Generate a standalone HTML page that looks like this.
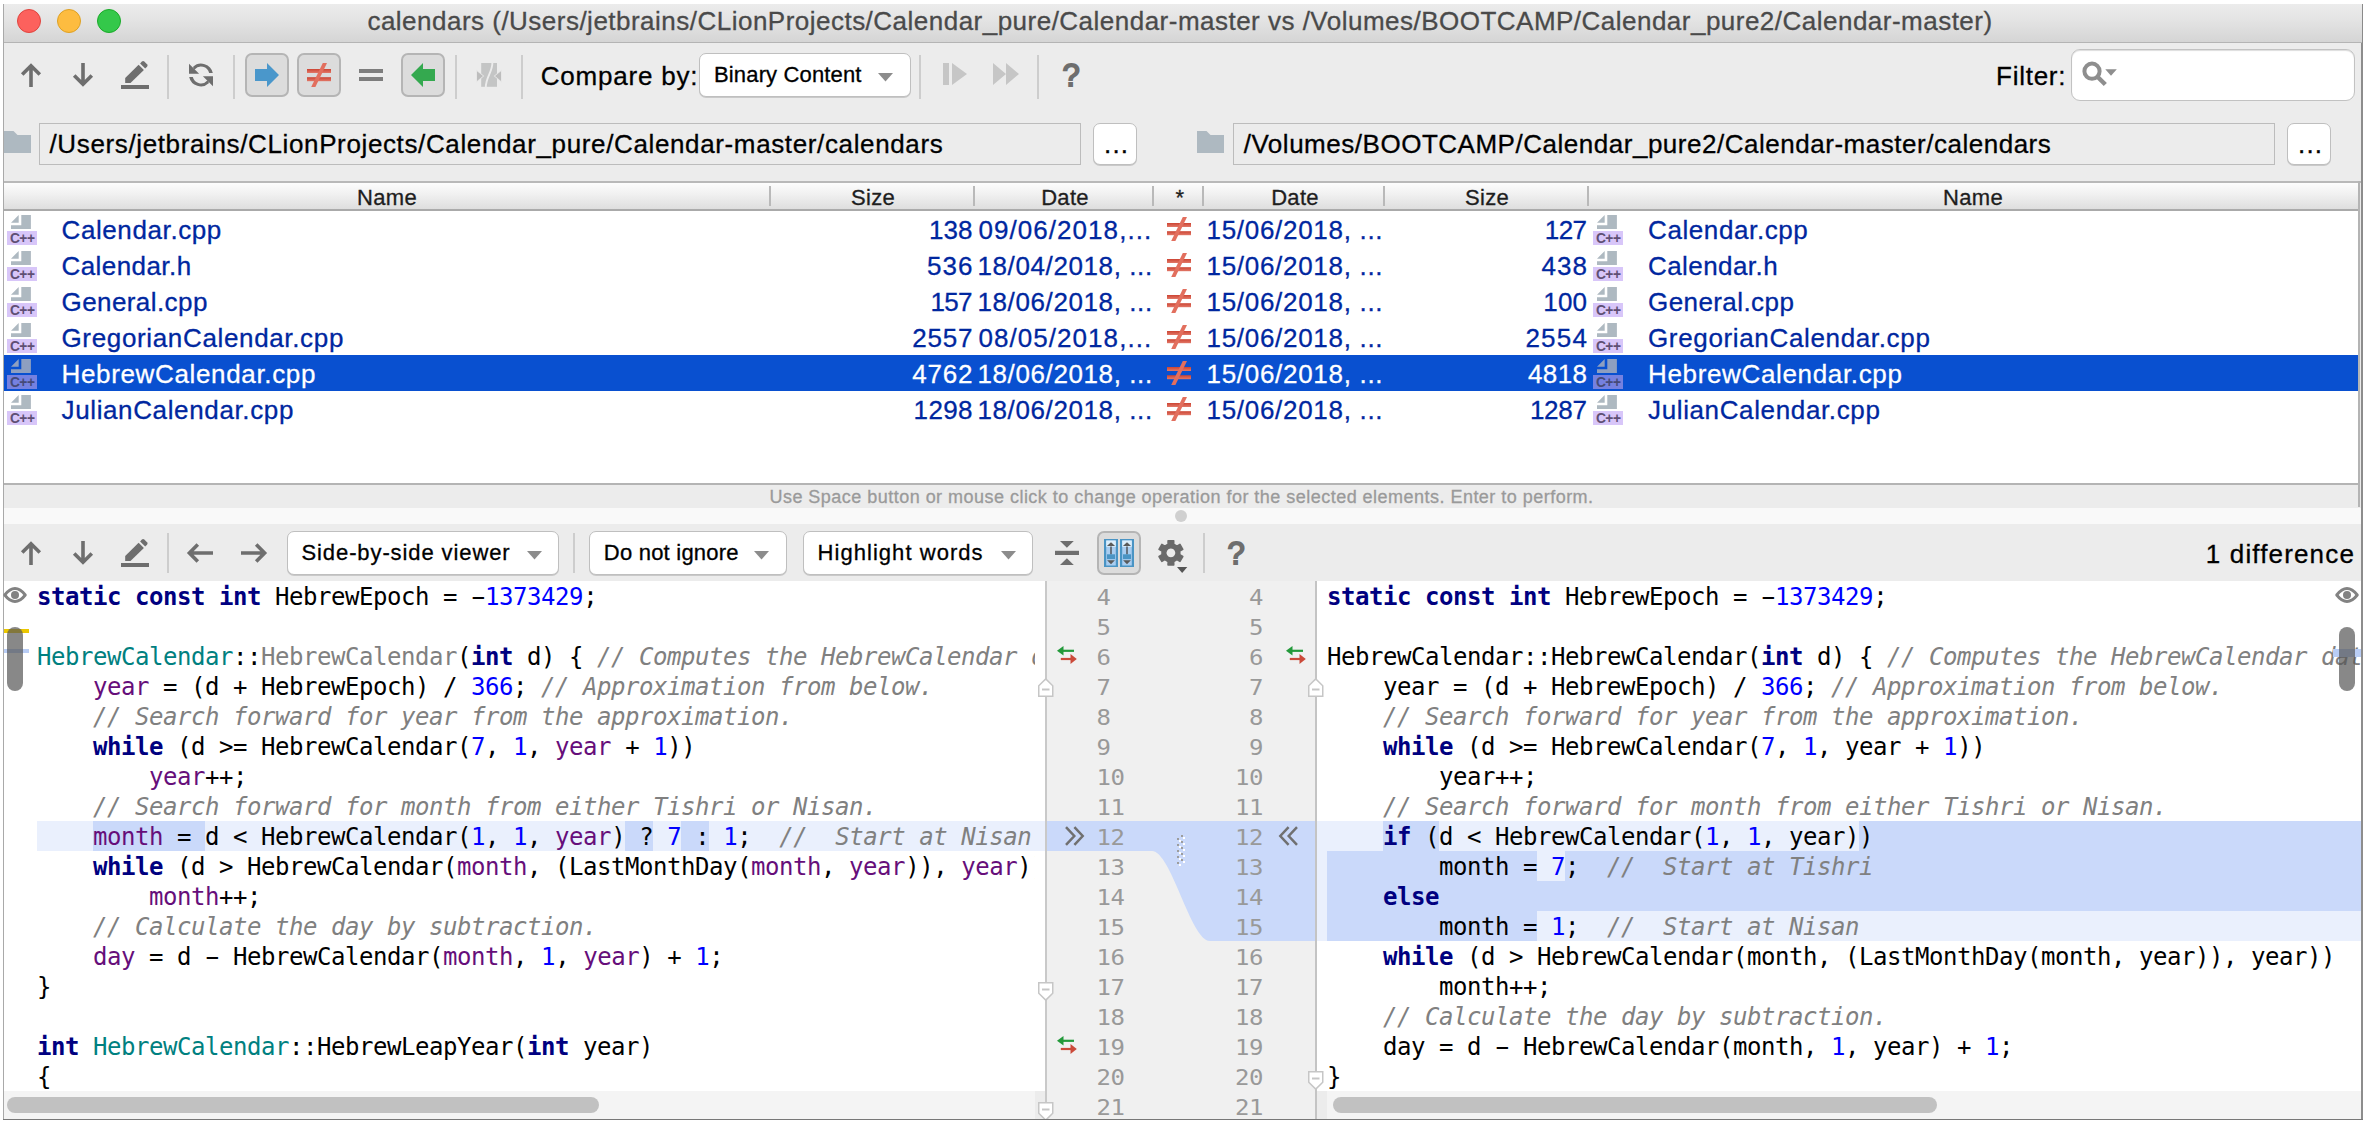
<!DOCTYPE html>
<html lang="en"><head><meta charset="utf-8"><title>calendars</title>
<style>
*{box-sizing:border-box;margin:0;padding:0}
html,body{width:2367px;height:1126px;overflow:hidden;background:#fff}
body{position:relative;font-family:"Liberation Sans", sans-serif;color:#000}
.abs{position:absolute}
.t{position:absolute;white-space:pre;font-family:"Liberation Sans", sans-serif;-webkit-text-stroke:0.3px currentColor}
svg{position:absolute;overflow:visible}
#win{position:absolute;left:3px;top:4px;width:2360px;height:1116px;background:#ececec;border-left:1px solid #a9a9a9;border-right:2px solid #8a8a8a;overflow:hidden}
#title{position:absolute;left:0;top:4px;width:2367px;height:39px}
.code{position:absolute;top:581px;height:538px;overflow:hidden;font-family:"DejaVu Sans Mono", "Liberation Mono", monospace;font-size:24px;letter-spacing:-0.449px;white-space:pre;color:#000}
.ln{position:absolute;left:0;height:30px;line-height:30px;margin-top:1px}
.k{color:#000080;font-weight:bold}
.n{color:#0000ff}
.c{color:#808080;font-style:italic}
.t_{color:#008080}
.g{color:#808080}
.p{color:#660e7a}
.m{display:inline-block;transform:scaleX(1.85)}
.num{position:absolute;font-family:"DejaVu Sans Mono", "Liberation Mono", monospace;font-size:24px;letter-spacing:-0.449px;color:#999;height:30px;line-height:30px;width:60px;margin-top:1px;transform:scaleY(0.92);transform-origin:0 23.3px}
.btn{position:absolute;background:#dcdcdc;border:2px solid #b5b5b5;border-radius:7px}
.combo{position:absolute;background:#fff;border:1px solid #bfbfbf;border-radius:7px;box-shadow:0 1px 0 #c9c9c9}
.sep{position:absolute;width:2px;background:#cdcdcd}
.hsep{position:absolute;width:2px;background:#b9b9b9;top:186px;height:20px}
</style></head>
<body>
<div id="win"></div>
<div class="abs" style="left:4px;top:4px;width:2358px;height:38px;background:linear-gradient(#ececec,#e4e4e4 40%,#d5d5d5)"></div>
<div class="abs" style="left:4px;top:42px;width:2358px;height:1px;background:#b4b4b4"></div>
<div class="abs" style="left:17px;top:9px;width:24px;height:24px;border-radius:12px;background:#fc615d;border:1px solid #e0443e"></div>
<div class="abs" style="left:57px;top:9px;width:24px;height:24px;border-radius:12px;background:#fdbc40;border:1px solid #dea123"></div>
<div class="abs" style="left:97px;top:9px;width:24px;height:24px;border-radius:12px;background:#34c84a;border:1px solid #1aab29"></div>
<div class="t" style="top:7.99px;left:1180px;transform:translateX(-50%);font-size:26px;line-height:26px;height:26px;color:#4a4a4a;letter-spacing:0.485px;">calendars (/Users/jetbrains/CLionProjects/Calendar_pure/Calendar-master vs /Volumes/BOOTCAMP/Calendar_pure2/Calendar-master)</div>
<svg style="left:19px;top:63px" width="24" height="24" viewBox="0 0 24 24"><path d="M12 2V24M3.2 11.6L12 2.8L20.8 11.6" fill="none" stroke="#6e6e6e" stroke-width="3.6" stroke-linejoin="miter"/></svg>
<svg style="left:71px;top:63px" width="24" height="24" viewBox="0 0 24 24"><path d="M12 0V22M3.2 12.4L12 21.2L20.8 12.4" fill="none" stroke="#6e6e6e" stroke-width="3.6" stroke-linejoin="miter"/></svg>
<svg style="left:121px;top:61px" width="28" height="28" viewBox="0 0 28 28"><rect x="0" y="24" width="28" height="4" fill="#6e6e6e"/><path d="M4.2 22V17L17.6 3.7L22.9 9L9.5 22Z" fill="#6e6e6e"/><path d="M19.1 2.4L20.9 .6a1.7 1.7 0 0 1 2.4 0L26 3.3a1.7 1.7 0 0 1 0 2.4L24.2 7.5Z" fill="#6e6e6e"/></svg>
<div class="sep" style="left:167px;top:55px;height:44px"></div>
<svg style="left:189px;top:63px" width="24" height="24" viewBox="0 0 24 24"><path d="M3.9 3.9A12 12 0 0 1 23.83 10H20.16A8.4 8.4 0 0 0 5.66 6.49ZM0 0.7V10.8H10.1Z" fill="#6e6e6e"/><g transform="rotate(180 12 12)"><path d="M3.9 3.9A12 12 0 0 1 23.83 10H20.16A8.4 8.4 0 0 0 5.66 6.49ZM0 0.7V10.8H10.1Z" fill="#6e6e6e"/></g></svg>
<div class="sep" style="left:233px;top:55px;height:44px"></div>
<div class="btn" style="left:245px;top:53px;width:44px;height:44px"></div>
<div class="btn" style="left:297px;top:53px;width:44px;height:44px"></div>
<div class="btn" style="left:401px;top:53px;width:44px;height:44px"></div>
<svg style="left:255px;top:63px" width="24" height="24" viewBox="0 0 24 24"><path d="M0 6H12V0L24 12L12 24V18H0Z" fill="#4a97cb"/></svg>
<svg style="left:307px;top:63px" width="24" height="24" viewBox="0 0 24 24"><defs><linearGradient id="ng" x1="0" y1="0" x2="0" y2="1"><stop offset="0" stop-color="#cc4433"/><stop offset="1" stop-color="#e27868"/></linearGradient></defs><rect x="0" y="6" width="24" height="4" fill="url(#ng)"/><rect x="0" y="14.2" width="24" height="4" fill="url(#ng)"/><path d="M15.8 0H20L8.4 24H4.2Z" fill="#e26f5e"/></svg>
<div class="abs" style="left:359px;top:69px;width:24px;height:4px;background:#7d7d7d;"></div>
<div class="abs" style="left:359px;top:77.3px;width:24px;height:4px;background:#7d7d7d;"></div>
<svg style="left:411px;top:63px" width="24" height="24" viewBox="0 0 24 24"><path d="M24 6H12V0L0 12L12 24V18H24Z" fill="#34a94f"/></svg>
<div class="sep" style="left:455px;top:55px;height:44px"></div>
<svg style="left:477px;top:63px" width="24" height="24" viewBox="0 0 24 24"><rect x="4.2" y="0" width="15.8" height="23.8" fill="#c4c5c5"/><path d="M15.4 -0.5C15.4 9.5 8.8 14 8.8 24.5" fill="none" stroke="#ececec" stroke-width="1.9"/><path d="M0 8.2V18L6 13.1Z M24 8.2V18L18 13.1Z" fill="#bdbdbd" stroke="#e6e6e6" stroke-width="1.6" paint-order="stroke"/></svg>
<div class="sep" style="left:521px;top:55px;height:44px"></div>
<div class="t" style="top:62.99px;font-size:26px;line-height:26px;height:26px;color:#000;left:540.7px;letter-spacing:0.79px;">Compare by:</div>
<div class="combo" style="left:699px;top:53px;width:212px;height:44px"></div>
<div class="t" style="top:64.08px;font-size:22px;line-height:22px;height:22px;color:#000;left:714px;letter-spacing:0.15px;">Binary Content</div>
<svg style="left:878px;top:73px" width="15" height="8.5" viewBox="0 0 15 8.5"><path d="M0 0H15 L7.5 8.5Z" fill="#8c8c8c"/></svg>
<div class="sep" style="left:919px;top:55px;height:44px"></div>
<svg style="left:943px;top:63px" width="24" height="22" viewBox="0 0 24 22"><rect x="0" y="0" width="6" height="22" fill="#c6c6c6"/><path d="M9 0L24 11L9 22Z" fill="#c6c6c6"/></svg>
<svg style="left:993px;top:63px" width="26" height="22" viewBox="0 0 26 22"><path d="M0 0L13 11L0 22Z M13 0L26 11L13 22Z" fill="#c6c6c6"/></svg>
<div class="sep" style="left:1037px;top:55px;height:44px"></div>
<div class="t" style="top:60.26px;left:1071px;transform:translateX(-50%);font-size:31px;line-height:31px;height:31px;color:#6e6e6e;-webkit-text-stroke:1.8px #6e6e6e;">?</div>
<div class="t" style="top:62.99px;font-size:26px;line-height:26px;height:26px;color:#000;left:1996px;letter-spacing:0.75px;">Filter:</div>
<div class="abs" style="left:2071px;top:49px;width:284px;height:52px;background:#fff;border:1px solid #c2c2c2;border-radius:9px;box-shadow:inset 0 1px 1px #ddd"></div>
<svg style="left:2082px;top:62px" width="36" height="26" viewBox="0 0 36 26"><circle cx="10" cy="9.2" r="7.6" fill="none" stroke="#8e8e8e" stroke-width="4"/><path d="M15 14.2L23.3 22.5" stroke="#8e8e8e" stroke-width="4.4" fill="none"/><path d="M23.3 7.2H34.8L29 13.8Z" fill="#8e8e8e"/></svg>
<svg style="left:4px;top:131px" width="27" height="22" viewBox="0 0 27 22"><path d="M0 0H9.5L13.5 4H27V22H0Z" fill="#aeb9c1"/></svg>
<div class="abs" style="left:39px;top:123px;width:1042px;height:42px;border:1px solid #bcbcbc;background:#ececec"></div>
<div class="t" style="top:130.99px;font-size:26px;line-height:26px;height:26px;color:#000;left:49.5px;letter-spacing:0.63px;">/Users/jetbrains/CLionProjects/Calendar_pure/Calendar-master/calendars</div>
<div class="combo" style="left:1093px;top:123px;width:44px;height:42px"></div>
<div class="t" style="top:130.99px;font-size:26px;line-height:26px;height:26px;color:#000;left:1104px;letter-spacing:1.2px;">...</div>
<svg style="left:1197px;top:131px" width="27" height="22" viewBox="0 0 27 22"><path d="M0 0H9.5L13.5 4H27V22H0Z" fill="#aeb9c1"/></svg>
<div class="abs" style="left:1233px;top:123px;width:1042px;height:42px;border:1px solid #bcbcbc;background:#ececec"></div>
<div class="t" style="top:130.99px;font-size:26px;line-height:26px;height:26px;color:#000;left:1243.7px;letter-spacing:0.52px;">/Volumes/BOOTCAMP/Calendar_pure2/Calendar-master/calendars</div>
<div class="combo" style="left:2287px;top:123px;width:44px;height:42px"></div>
<div class="t" style="top:130.99px;font-size:26px;line-height:26px;height:26px;color:#000;left:2298px;letter-spacing:1.2px;">...</div>
<div class="abs" style="left:4px;top:181px;width:2358px;height:2px;background:#b9b9b9;"></div>
<div class="abs" style="left:4px;top:183px;width:2354px;height:26px;background:linear-gradient(#fdfdfd,#f0f0f0 45%,#dedede)"></div>
<div class="abs" style="left:4px;top:209px;width:2354px;height:2px;background:#aaaaaa;"></div>
<div class="abs" style="left:4px;top:211px;width:2354px;height:272px;background:#fff;"></div>
<div class="abs" style="left:2358px;top:181px;width:2px;height:326px;background:#b4b4b4;"></div>
<div class="hsep" style="left:769px"></div>
<div class="hsep" style="left:973px"></div>
<div class="hsep" style="left:1152px"></div>
<div class="hsep" style="left:1202px"></div>
<div class="hsep" style="left:1383px"></div>
<div class="hsep" style="left:1587px"></div>
<div class="t" style="top:187.08px;left:387px;transform:translateX(-50%);font-size:22px;line-height:22px;height:22px;color:#1e1e1e;letter-spacing:0.3px;">Name</div>
<div class="t" style="top:187.08px;left:873px;transform:translateX(-50%);font-size:22px;line-height:22px;height:22px;color:#1e1e1e;letter-spacing:0.3px;">Size</div>
<div class="t" style="top:187.08px;left:1065px;transform:translateX(-50%);font-size:22px;line-height:22px;height:22px;color:#1e1e1e;letter-spacing:0.3px;">Date</div>
<div class="t" style="top:187.08px;left:1180px;transform:translateX(-50%);font-size:22px;line-height:22px;height:22px;color:#1e1e1e;letter-spacing:0.3px;">*</div>
<div class="t" style="top:187.08px;left:1295px;transform:translateX(-50%);font-size:22px;line-height:22px;height:22px;color:#1e1e1e;letter-spacing:0.3px;">Date</div>
<div class="t" style="top:187.08px;left:1487px;transform:translateX(-50%);font-size:22px;line-height:22px;height:22px;color:#1e1e1e;letter-spacing:0.3px;">Size</div>
<div class="t" style="top:187.08px;left:1973px;transform:translateX(-50%);font-size:22px;line-height:22px;height:22px;color:#1e1e1e;letter-spacing:0.3px;">Name</div>
<svg style="left:7px;top:215px" width="30" height="30" viewBox="0 0 30 30"><path d="M14.3 0H23.9V13.9H4V10.2H14.3Z M11.7 -0.1V7.7H4Z" fill="#aeb9c1"/><rect x="0" y="16" width="30" height="14" fill="#d8c6f9"/><text x="15.2" y="27.9" text-anchor="middle" font-family='"Liberation Sans", sans-serif' font-size="13.8" font-weight="bold" fill="#5f4f74" letter-spacing="-0.5">C++</text></svg>
<div class="t" style="top:217.49px;font-size:26px;line-height:26px;height:26px;color:#00279f;left:61.5px;letter-spacing:0.6px;">Calendar.cpp</div>
<div class="t" style="top:217.49px;font-size:26px;line-height:26px;height:26px;color:#00279f;right:1394.5px;">138</div>
<div class="t" style="top:217.49px;font-size:26px;line-height:26px;height:26px;color:#00279f;left:978.5px;letter-spacing:1.05px;">09/06/2018,...</div>
<svg style="left:1167px;top:217px" width="24" height="24" viewBox="0 0 24 24"><defs><linearGradient id="ng" x1="0" y1="0" x2="0" y2="1"><stop offset="0" stop-color="#cc4433"/><stop offset="1" stop-color="#e27868"/></linearGradient></defs><rect x="0" y="6" width="24" height="4" fill="url(#ng)"/><rect x="0" y="14.2" width="24" height="4" fill="url(#ng)"/><path d="M15.8 0H20L8.4 24H4.2Z" fill="#e26f5e"/></svg>
<div class="t" style="top:217.49px;font-size:26px;line-height:26px;height:26px;color:#00279f;left:1206.5px;letter-spacing:0.7px;">15/06/2018, ...</div>
<div class="t" style="top:217.49px;font-size:26px;line-height:26px;height:26px;color:#00279f;right:780.6px;letter-spacing:-0.6px;">127</div>
<svg style="left:1593px;top:215px" width="30" height="30" viewBox="0 0 30 30"><path d="M14.3 0H23.9V13.9H4V10.2H14.3Z M11.7 -0.1V7.7H4Z" fill="#aeb9c1"/><rect x="0" y="16" width="30" height="14" fill="#d8c6f9"/><text x="15.2" y="27.9" text-anchor="middle" font-family='"Liberation Sans", sans-serif' font-size="13.8" font-weight="bold" fill="#5f4f74" letter-spacing="-0.5">C++</text></svg>
<div class="t" style="top:217.49px;font-size:26px;line-height:26px;height:26px;color:#00279f;left:1648px;letter-spacing:0.6px;">Calendar.cpp</div>
<svg style="left:7px;top:251px" width="30" height="30" viewBox="0 0 30 30"><path d="M14.3 0H23.9V13.9H4V10.2H14.3Z M11.7 -0.1V7.7H4Z" fill="#aeb9c1"/><rect x="0" y="16" width="30" height="14" fill="#d8c6f9"/><text x="15.2" y="27.9" text-anchor="middle" font-family='"Liberation Sans", sans-serif' font-size="13.8" font-weight="bold" fill="#5f4f74" letter-spacing="-0.5">C++</text></svg>
<div class="t" style="top:253.49px;font-size:26px;line-height:26px;height:26px;color:#00279f;left:61.5px;letter-spacing:0.43px;">Calendar.h</div>
<div class="t" style="top:253.49px;font-size:26px;line-height:26px;height:26px;color:#00279f;right:1393.4px;letter-spacing:1.1px;">536</div>
<div class="t" style="top:253.49px;font-size:26px;line-height:26px;height:26px;color:#00279f;left:977.5px;letter-spacing:0.6px;">18/04/2018, ...</div>
<svg style="left:1167px;top:253px" width="24" height="24" viewBox="0 0 24 24"><defs><linearGradient id="ng" x1="0" y1="0" x2="0" y2="1"><stop offset="0" stop-color="#cc4433"/><stop offset="1" stop-color="#e27868"/></linearGradient></defs><rect x="0" y="6" width="24" height="4" fill="url(#ng)"/><rect x="0" y="14.2" width="24" height="4" fill="url(#ng)"/><path d="M15.8 0H20L8.4 24H4.2Z" fill="#e26f5e"/></svg>
<div class="t" style="top:253.49px;font-size:26px;line-height:26px;height:26px;color:#00279f;left:1206.5px;letter-spacing:0.7px;">15/06/2018, ...</div>
<div class="t" style="top:253.49px;font-size:26px;line-height:26px;height:26px;color:#00279f;right:778.9px;letter-spacing:1.1px;">438</div>
<svg style="left:1593px;top:251px" width="30" height="30" viewBox="0 0 30 30"><path d="M14.3 0H23.9V13.9H4V10.2H14.3Z M11.7 -0.1V7.7H4Z" fill="#aeb9c1"/><rect x="0" y="16" width="30" height="14" fill="#d8c6f9"/><text x="15.2" y="27.9" text-anchor="middle" font-family='"Liberation Sans", sans-serif' font-size="13.8" font-weight="bold" fill="#5f4f74" letter-spacing="-0.5">C++</text></svg>
<div class="t" style="top:253.49px;font-size:26px;line-height:26px;height:26px;color:#00279f;left:1648px;letter-spacing:0.43px;">Calendar.h</div>
<svg style="left:7px;top:287px" width="30" height="30" viewBox="0 0 30 30"><path d="M14.3 0H23.9V13.9H4V10.2H14.3Z M11.7 -0.1V7.7H4Z" fill="#aeb9c1"/><rect x="0" y="16" width="30" height="14" fill="#d8c6f9"/><text x="15.2" y="27.9" text-anchor="middle" font-family='"Liberation Sans", sans-serif' font-size="13.8" font-weight="bold" fill="#5f4f74" letter-spacing="-0.5">C++</text></svg>
<div class="t" style="top:289.49px;font-size:26px;line-height:26px;height:26px;color:#00279f;left:61.5px;letter-spacing:0.42px;">General.cpp</div>
<div class="t" style="top:289.49px;font-size:26px;line-height:26px;height:26px;color:#00279f;right:1395.17px;letter-spacing:-0.67px;">157</div>
<div class="t" style="top:289.49px;font-size:26px;line-height:26px;height:26px;color:#00279f;left:977.5px;letter-spacing:0.6px;">18/06/2018, ...</div>
<svg style="left:1167px;top:289px" width="24" height="24" viewBox="0 0 24 24"><defs><linearGradient id="ng" x1="0" y1="0" x2="0" y2="1"><stop offset="0" stop-color="#cc4433"/><stop offset="1" stop-color="#e27868"/></linearGradient></defs><rect x="0" y="6" width="24" height="4" fill="url(#ng)"/><rect x="0" y="14.2" width="24" height="4" fill="url(#ng)"/><path d="M15.8 0H20L8.4 24H4.2Z" fill="#e26f5e"/></svg>
<div class="t" style="top:289.49px;font-size:26px;line-height:26px;height:26px;color:#00279f;left:1206.5px;letter-spacing:0.7px;">15/06/2018, ...</div>
<div class="t" style="top:289.49px;font-size:26px;line-height:26px;height:26px;color:#00279f;right:779.8px;letter-spacing:0.2px;">100</div>
<svg style="left:1593px;top:287px" width="30" height="30" viewBox="0 0 30 30"><path d="M14.3 0H23.9V13.9H4V10.2H14.3Z M11.7 -0.1V7.7H4Z" fill="#aeb9c1"/><rect x="0" y="16" width="30" height="14" fill="#d8c6f9"/><text x="15.2" y="27.9" text-anchor="middle" font-family='"Liberation Sans", sans-serif' font-size="13.8" font-weight="bold" fill="#5f4f74" letter-spacing="-0.5">C++</text></svg>
<div class="t" style="top:289.49px;font-size:26px;line-height:26px;height:26px;color:#00279f;left:1648px;letter-spacing:0.42px;">General.cpp</div>
<svg style="left:7px;top:323px" width="30" height="30" viewBox="0 0 30 30"><path d="M14.3 0H23.9V13.9H4V10.2H14.3Z M11.7 -0.1V7.7H4Z" fill="#aeb9c1"/><rect x="0" y="16" width="30" height="14" fill="#d8c6f9"/><text x="15.2" y="27.9" text-anchor="middle" font-family='"Liberation Sans", sans-serif' font-size="13.8" font-weight="bold" fill="#5f4f74" letter-spacing="-0.5">C++</text></svg>
<div class="t" style="top:325.49px;font-size:26px;line-height:26px;height:26px;color:#00279f;left:61.5px;letter-spacing:0.65px;">GregorianCalendar.cpp</div>
<div class="t" style="top:325.49px;font-size:26px;line-height:26px;height:26px;color:#00279f;right:1393.7px;letter-spacing:0.8px;">2557</div>
<div class="t" style="top:325.49px;font-size:26px;line-height:26px;height:26px;color:#00279f;left:978.5px;letter-spacing:1.05px;">08/05/2018,...</div>
<svg style="left:1167px;top:325px" width="24" height="24" viewBox="0 0 24 24"><defs><linearGradient id="ng" x1="0" y1="0" x2="0" y2="1"><stop offset="0" stop-color="#cc4433"/><stop offset="1" stop-color="#e27868"/></linearGradient></defs><rect x="0" y="6" width="24" height="4" fill="url(#ng)"/><rect x="0" y="14.2" width="24" height="4" fill="url(#ng)"/><path d="M15.8 0H20L8.4 24H4.2Z" fill="#e26f5e"/></svg>
<div class="t" style="top:325.49px;font-size:26px;line-height:26px;height:26px;color:#00279f;left:1206.5px;letter-spacing:0.7px;">15/06/2018, ...</div>
<div class="t" style="top:325.49px;font-size:26px;line-height:26px;height:26px;color:#00279f;right:778.75px;letter-spacing:1.25px;">2554</div>
<svg style="left:1593px;top:323px" width="30" height="30" viewBox="0 0 30 30"><path d="M14.3 0H23.9V13.9H4V10.2H14.3Z M11.7 -0.1V7.7H4Z" fill="#aeb9c1"/><rect x="0" y="16" width="30" height="14" fill="#d8c6f9"/><text x="15.2" y="27.9" text-anchor="middle" font-family='"Liberation Sans", sans-serif' font-size="13.8" font-weight="bold" fill="#5f4f74" letter-spacing="-0.5">C++</text></svg>
<div class="t" style="top:325.49px;font-size:26px;line-height:26px;height:26px;color:#00279f;left:1648px;letter-spacing:0.65px;">GregorianCalendar.cpp</div>
<div class="abs" style="left:4px;top:355px;width:2354px;height:36px;background:#0950d0;"></div>
<svg style="left:7px;top:359px" width="30" height="30" viewBox="0 0 30 30"><path d="M14.3 0H23.9V13.9H4V10.2H14.3Z M11.7 -0.1V7.7H4Z" fill="#8e9fc0"/><rect x="0" y="16" width="30" height="14" fill="#7581e0"/><text x="15.2" y="27.9" text-anchor="middle" font-family='"Liberation Sans", sans-serif' font-size="13.8" font-weight="bold" fill="#454a78" letter-spacing="-0.5">C++</text></svg>
<div class="t" style="top:361.49px;font-size:26px;line-height:26px;height:26px;color:#fff;left:61.5px;letter-spacing:0.65px;">HebrewCalendar.cpp</div>
<div class="t" style="top:361.49px;font-size:26px;line-height:26px;height:26px;color:#fff;right:1393.7px;letter-spacing:0.8px;">4762</div>
<div class="t" style="top:361.49px;font-size:26px;line-height:26px;height:26px;color:#fff;left:977.5px;letter-spacing:0.6px;">18/06/2018, ...</div>
<svg style="left:1167px;top:361px" width="24" height="24" viewBox="0 0 24 24"><defs><linearGradient id="ng" x1="0" y1="0" x2="0" y2="1"><stop offset="0" stop-color="#cc4433"/><stop offset="1" stop-color="#e27868"/></linearGradient></defs><rect x="0" y="6" width="24" height="4" fill="url(#ng)"/><rect x="0" y="14.2" width="24" height="4" fill="url(#ng)"/><path d="M15.8 0H20L8.4 24H4.2Z" fill="#e26f5e"/></svg>
<div class="t" style="top:361.49px;font-size:26px;line-height:26px;height:26px;color:#fff;left:1206.5px;letter-spacing:0.7px;">15/06/2018, ...</div>
<div class="t" style="top:361.49px;font-size:26px;line-height:26px;height:26px;color:#fff;right:779.58px;letter-spacing:0.42px;">4818</div>
<svg style="left:1593px;top:359px" width="30" height="30" viewBox="0 0 30 30"><path d="M14.3 0H23.9V13.9H4V10.2H14.3Z M11.7 -0.1V7.7H4Z" fill="#8e9fc0"/><rect x="0" y="16" width="30" height="14" fill="#7581e0"/><text x="15.2" y="27.9" text-anchor="middle" font-family='"Liberation Sans", sans-serif' font-size="13.8" font-weight="bold" fill="#454a78" letter-spacing="-0.5">C++</text></svg>
<div class="t" style="top:361.49px;font-size:26px;line-height:26px;height:26px;color:#fff;left:1648px;letter-spacing:0.65px;">HebrewCalendar.cpp</div>
<svg style="left:7px;top:395px" width="30" height="30" viewBox="0 0 30 30"><path d="M14.3 0H23.9V13.9H4V10.2H14.3Z M11.7 -0.1V7.7H4Z" fill="#aeb9c1"/><rect x="0" y="16" width="30" height="14" fill="#d8c6f9"/><text x="15.2" y="27.9" text-anchor="middle" font-family='"Liberation Sans", sans-serif' font-size="13.8" font-weight="bold" fill="#5f4f74" letter-spacing="-0.5">C++</text></svg>
<div class="t" style="top:397.49px;font-size:26px;line-height:26px;height:26px;color:#00279f;left:61.5px;letter-spacing:0.63px;">JulianCalendar.cpp</div>
<div class="t" style="top:397.49px;font-size:26px;line-height:26px;height:26px;color:#00279f;right:1394.15px;letter-spacing:0.35px;">1298</div>
<div class="t" style="top:397.49px;font-size:26px;line-height:26px;height:26px;color:#00279f;left:977.5px;letter-spacing:0.6px;">18/06/2018, ...</div>
<svg style="left:1167px;top:397px" width="24" height="24" viewBox="0 0 24 24"><defs><linearGradient id="ng" x1="0" y1="0" x2="0" y2="1"><stop offset="0" stop-color="#cc4433"/><stop offset="1" stop-color="#e27868"/></linearGradient></defs><rect x="0" y="6" width="24" height="4" fill="url(#ng)"/><rect x="0" y="14.2" width="24" height="4" fill="url(#ng)"/><path d="M15.8 0H20L8.4 24H4.2Z" fill="#e26f5e"/></svg>
<div class="t" style="top:397.49px;font-size:26px;line-height:26px;height:26px;color:#00279f;left:1206.5px;letter-spacing:0.7px;">15/06/2018, ...</div>
<div class="t" style="top:397.49px;font-size:26px;line-height:26px;height:26px;color:#00279f;right:780.25px;letter-spacing:-0.25px;">1287</div>
<svg style="left:1593px;top:395px" width="30" height="30" viewBox="0 0 30 30"><path d="M14.3 0H23.9V13.9H4V10.2H14.3Z M11.7 -0.1V7.7H4Z" fill="#aeb9c1"/><rect x="0" y="16" width="30" height="14" fill="#d8c6f9"/><text x="15.2" y="27.9" text-anchor="middle" font-family='"Liberation Sans", sans-serif' font-size="13.8" font-weight="bold" fill="#5f4f74" letter-spacing="-0.5">C++</text></svg>
<div class="t" style="top:397.49px;font-size:26px;line-height:26px;height:26px;color:#00279f;left:1648px;letter-spacing:0.63px;">JulianCalendar.cpp</div>
<div class="abs" style="left:4px;top:483px;width:2356px;height:2px;background:#b4b4b4;"></div>
<div class="t" style="top:488.26px;left:1181.5px;transform:translateX(-50%);font-size:18px;line-height:18px;height:18px;color:#9a9a9a;letter-spacing:0.476px;">Use Space button or mouse click to change operation for the selected elements. Enter to perform.</div>
<div class="abs" style="left:4px;top:508px;width:2358px;height:16px;background:#f9f9f9;"></div>
<div class="abs" style="left:1175px;top:510px;width:12px;height:12px;border-radius:6px;background:#d0d0d0"></div>
<svg style="left:19px;top:541px" width="24" height="24" viewBox="0 0 24 24"><path d="M12 2V24M3.2 11.6L12 2.8L20.8 11.6" fill="none" stroke="#6e6e6e" stroke-width="3.6" stroke-linejoin="miter"/></svg>
<svg style="left:71px;top:541px" width="24" height="24" viewBox="0 0 24 24"><path d="M12 0V22M3.2 12.4L12 21.2L20.8 12.4" fill="none" stroke="#6e6e6e" stroke-width="3.6" stroke-linejoin="miter"/></svg>
<svg style="left:121px;top:539px" width="28" height="28" viewBox="0 0 28 28"><rect x="0" y="24" width="28" height="4" fill="#6e6e6e"/><path d="M4.2 22V17L17.6 3.7L22.9 9L9.5 22Z" fill="#6e6e6e"/><path d="M19.1 2.4L20.9 .6a1.7 1.7 0 0 1 2.4 0L26 3.3a1.7 1.7 0 0 1 0 2.4L24.2 7.5Z" fill="#6e6e6e"/></svg>
<div class="sep" style="left:167px;top:533px;height:40px"></div>
<svg style="left:187px;top:543px" width="26" height="20" viewBox="0 0 26 20"><path d="M26 10H3M10.8 1.5L2.4 10L10.8 18.5" fill="none" stroke="#6e6e6e" stroke-width="3.6"/></svg>
<svg style="left:241px;top:543px" width="26" height="20" viewBox="0 0 26 20"><path d="M0 10H23M15.2 1.5L23.6 10L15.2 18.5" fill="none" stroke="#6e6e6e" stroke-width="3.6"/></svg>
<div class="combo" style="left:287px;top:531px;width:272px;height:44px"></div>
<div class="t" style="top:542.38px;font-size:22px;line-height:22px;height:22px;color:#000;left:301.5px;letter-spacing:0.9px;">Side-by-side viewer</div>
<svg style="left:526.5px;top:551px" width="15" height="8.5" viewBox="0 0 15 8.5"><path d="M0 0H15 L7.5 8.5Z" fill="#8c8c8c"/></svg>
<div class="sep" style="left:573px;top:533px;height:40px"></div>
<div class="combo" style="left:589px;top:531px;width:198px;height:44px"></div>
<div class="t" style="top:542.38px;font-size:22px;line-height:22px;height:22px;color:#000;left:603.8px;letter-spacing:0.22px;">Do not ignore</div>
<svg style="left:754px;top:551px" width="15" height="8.5" viewBox="0 0 15 8.5"><path d="M0 0H15 L7.5 8.5Z" fill="#8c8c8c"/></svg>
<div class="combo" style="left:803px;top:531px;width:230px;height:44px"></div>
<div class="t" style="top:542.38px;font-size:22px;line-height:22px;height:22px;color:#000;left:817.5px;letter-spacing:1.05px;">Highlight words</div>
<svg style="left:1000.5px;top:551px" width="15" height="8.5" viewBox="0 0 15 8.5"><path d="M0 0H15 L7.5 8.5Z" fill="#8c8c8c"/></svg>
<svg style="left:1055px;top:541px" width="24" height="24" viewBox="0 0 24 24"><rect x="0" y="9.8" width="24" height="4.2" fill="#6e6e6e"/><path d="M5 0H18.8L11.9 6.7Z M5 24H18.8L11.9 17.3Z" fill="#6e6e6e"/></svg>
<div class="btn" style="left:1097px;top:531px;width:44px;height:44px"></div>
<svg style="left:1104px;top:539px" width="30" height="28" viewBox="0 0 30 28"><rect x="0" y="0" width="14" height="28" fill="#4a94c4"/><rect x="2.2" y="1.5" width="9.6" height="25" fill="#a9cdf0"/><rect x="2.2" y="1.5" width="9.6" height="6.3" fill="#dbeefc"/><path d="M2.9 7L7 3.2L11.1 7Z" fill="#5a5a5a"/><rect x="6.1" y="7.5" width="1.8" height="8" fill="#5f6a75"/><rect x="3" y="15.3" width="8" height="4.8" fill="#4a94c4"/><path d="M3.1 21.2L7 25.2L10.9 21.2Z" fill="#5a5a5a"/><rect x="16" y="0" width="14" height="28" fill="#4a94c4"/><rect x="18.2" y="1.5" width="9.6" height="25" fill="#a9cdf0"/><rect x="18.2" y="1.5" width="9.6" height="6.3" fill="#dbeefc"/><path d="M18.9 7L23 3.2L27.1 7Z" fill="#5a5a5a"/><rect x="22.1" y="7.5" width="1.8" height="8" fill="#5f6a75"/><rect x="19" y="15.3" width="8" height="4.8" fill="#4a94c4"/><path d="M19.1 21.2L23 25.2L26.9 21.2Z" fill="#5a5a5a"/></svg>
<svg style="left:1158.1px;top:540.1px" width="25.8" height="25.8" viewBox="0 0 25.8 25.8"><path d="M10.14 4.28L10.07 0.83L15.73 0.83L15.66 4.28L18.98 6.20L21.94 4.42L24.77 9.31L21.75 10.98L21.75 14.82L24.77 16.49L21.94 21.38L18.98 19.60L15.66 21.52L15.73 24.97L10.07 24.97L10.14 21.52L6.82 19.60L3.86 21.38L1.03 16.49L4.05 14.82L4.05 10.98L1.03 9.31L3.86 4.42L6.82 6.20ZM12.90 7.70a5.2 5.2 0 1 0 0.01 0Z" fill="#6a6a6a" fill-rule="evenodd" stroke="#6a6a6a" stroke-width="1.6" stroke-linejoin="round"/></svg>
<svg style="left:1177px;top:567.2px" width="10.3" height="6" viewBox="0 0 10.3 6"><path d="M0 0H10.3 L5.15 6Z" fill="#555"/></svg>
<div class="sep" style="left:1203px;top:533px;height:40px"></div>
<div class="t" style="top:538.26px;left:1236px;transform:translateX(-50%);font-size:31px;line-height:31px;height:31px;color:#6e6e6e;-webkit-text-stroke:1.8px #6e6e6e;">?</div>
<div class="t" style="top:540.99px;font-size:26px;line-height:26px;height:26px;color:#000;right:12px;letter-spacing:1.15px;">1 difference</div>
<div class="abs" style="left:4px;top:581px;width:1041px;height:510px;background:#fff;"></div>
<div class="abs" style="left:4px;top:1091px;width:1031px;height:28px;background:#f4f4f4;"></div>
<div class="abs" style="left:1045px;top:581px;width:2px;height:538px;background:#c9c9c9;"></div>
<div class="abs" style="left:1047px;top:581px;width:268px;height:538px;background:#f0f0f0;"></div>
<div class="abs" style="left:1315px;top:581px;width:2px;height:538px;background:#c4c4c4;"></div>
<div class="abs" style="left:1317px;top:581px;width:1045px;height:510px;background:#fff;"></div>
<div class="abs" style="left:1327px;top:1091px;width:1035px;height:28px;background:#f4f4f4;"></div>
<div class="abs" style="left:37px;top:821px;width:1008px;height:30px;background:#eaf0fd;"></div>
<div class="abs" style="left:93px;top:821px;width:112px;height:30px;background:#cad9fa;"></div>
<div class="abs" style="left:625px;top:821px;width:28px;height:30px;background:#cad9fa;"></div>
<div class="abs" style="left:681px;top:821px;width:28px;height:30px;background:#cad9fa;"></div>
<svg style="left:1047px;top:581px" width="268" height="538" viewBox="0 0 268 538"><path d="M0 240H268V360H163C144 360 124 270 105 270H0Z" fill="#cad9fa"/></svg>
<div class="abs" style="left:1317px;top:821px;width:1045px;height:120px;background:#eaf0fd;"></div>
<div class="abs" style="left:1383px;top:821px;width:56px;height:30px;background:#cad9fa;"></div>
<div class="abs" style="left:1859px;top:821px;width:503px;height:30px;background:#cad9fa;"></div>
<div class="abs" style="left:1327px;top:851px;width:210px;height:30px;background:#cad9fa;"></div>
<div class="abs" style="left:1565px;top:851px;width:797px;height:30px;background:#cad9fa;"></div>
<div class="abs" style="left:1327px;top:881px;width:1035px;height:30px;background:#cad9fa;"></div>
<div class="abs" style="left:1327px;top:911px;width:210px;height:30px;background:#cad9fa;"></div>
<div class="code" id="lcode" style="left:37px;width:998px">
<div class="ln" style="top:0px"><span class="k">static</span> <span class="k">const</span> <span class="k">int</span> HebrewEpoch = <span class="m">-</span><span class="n">1373429</span>;</div>
<div class="ln" style="top:30px"></div>
<div class="ln" style="top:60px"><span class="t_">HebrewCalendar</span>::<span class="g">HebrewCalendar</span>(<span class="k">int</span> d) { <span class="c">// Computes the HebrewCalendar date</span></div>
<div class="ln" style="top:90px">    <span class="p">year</span> = (d + HebrewEpoch) / <span class="n">366</span>; <span class="c">// Approximation from below.</span></div>
<div class="ln" style="top:120px">    <span class="c">// Search forward for year from the approximation.</span></div>
<div class="ln" style="top:150px">    <span class="k">while</span> (d &gt;= HebrewCalendar(<span class="n">7</span>, <span class="n">1</span>, <span class="p">year</span> + <span class="n">1</span>))</div>
<div class="ln" style="top:180px">        <span class="p">year</span>++;</div>
<div class="ln" style="top:210px">    <span class="c">// Search forward for month from either Tishri or Nisan.</span></div>
<div class="ln" style="top:240px">    <span class="p">month</span> = d &lt; HebrewCalendar(<span class="n">1</span>, <span class="n">1</span>, <span class="p">year</span>) ? <span class="n">7</span> : <span class="n">1</span>;  <span class="c">//  Start at Nisan</span></div>
<div class="ln" style="top:270px">    <span class="k">while</span> (d &gt; HebrewCalendar(<span class="p">month</span>, (LastMonthDay(<span class="p">month</span>, <span class="p">year</span>)), <span class="p">year</span>))</div>
<div class="ln" style="top:300px">        <span class="p">month</span>++;</div>
<div class="ln" style="top:330px">    <span class="c">// Calculate the day by subtraction.</span></div>
<div class="ln" style="top:360px">    <span class="p">day</span> = d <span class="m">-</span> HebrewCalendar(<span class="p">month</span>, <span class="n">1</span>, <span class="p">year</span>) + <span class="n">1</span>;</div>
<div class="ln" style="top:390px">}</div>
<div class="ln" style="top:420px"></div>
<div class="ln" style="top:450px"><span class="k">int</span> <span class="t_">HebrewCalendar</span>::HebrewLeapYear(<span class="k">int</span> year)</div>
<div class="ln" style="top:480px">{</div>
</div>
<div class="code" id="rcode" style="left:1327px;width:1035px">
<div class="ln" style="top:0px"><span class="k">static</span> <span class="k">const</span> <span class="k">int</span> HebrewEpoch = <span class="m">-</span><span class="n">1373429</span>;</div>
<div class="ln" style="top:30px"></div>
<div class="ln" style="top:60px">HebrewCalendar::HebrewCalendar(<span class="k">int</span> d) { <span class="c">// Computes the HebrewCalendar date</span></div>
<div class="ln" style="top:90px">    year = (d + HebrewEpoch) / <span class="n">366</span>; <span class="c">// Approximation from below.</span></div>
<div class="ln" style="top:120px">    <span class="c">// Search forward for year from the approximation.</span></div>
<div class="ln" style="top:150px">    <span class="k">while</span> (d &gt;= HebrewCalendar(<span class="n">7</span>, <span class="n">1</span>, year + <span class="n">1</span>))</div>
<div class="ln" style="top:180px">        year++;</div>
<div class="ln" style="top:210px">    <span class="c">// Search forward for month from either Tishri or Nisan.</span></div>
<div class="ln" style="top:240px">    <span class="k">if</span> (d &lt; HebrewCalendar(<span class="n">1</span>, <span class="n">1</span>, year))</div>
<div class="ln" style="top:270px">        month = <span class="n">7</span>;  <span class="c">//  Start at Tishri</span></div>
<div class="ln" style="top:300px">    <span class="k">else</span></div>
<div class="ln" style="top:330px">        month = <span class="n">1</span>;  <span class="c">//  Start at Nisan</span></div>
<div class="ln" style="top:360px">    <span class="k">while</span> (d &gt; HebrewCalendar(month, (LastMonthDay(month, year)), year))</div>
<div class="ln" style="top:390px">        month++;</div>
<div class="ln" style="top:420px">    <span class="c">// Calculate the day by subtraction.</span></div>
<div class="ln" style="top:450px">    day = d <span class="m">-</span> HebrewCalendar(month, <span class="n">1</span>, year) + <span class="n">1</span>;</div>
<div class="ln" style="top:480px">}</div>
</div>
<div class="num" style="left:1096.5px;top:581px;text-align:left">4</div>
<div class="num" style="left:1203px;top:581px;text-align:right">4</div>
<div class="num" style="left:1096.5px;top:611px;text-align:left">5</div>
<div class="num" style="left:1203px;top:611px;text-align:right">5</div>
<div class="num" style="left:1096.5px;top:641px;text-align:left">6</div>
<div class="num" style="left:1203px;top:641px;text-align:right">6</div>
<div class="num" style="left:1096.5px;top:671px;text-align:left">7</div>
<div class="num" style="left:1203px;top:671px;text-align:right">7</div>
<div class="num" style="left:1096.5px;top:701px;text-align:left">8</div>
<div class="num" style="left:1203px;top:701px;text-align:right">8</div>
<div class="num" style="left:1096.5px;top:731px;text-align:left">9</div>
<div class="num" style="left:1203px;top:731px;text-align:right">9</div>
<div class="num" style="left:1096.5px;top:761px;text-align:left">10</div>
<div class="num" style="left:1203px;top:761px;text-align:right">10</div>
<div class="num" style="left:1096.5px;top:791px;text-align:left">11</div>
<div class="num" style="left:1203px;top:791px;text-align:right">11</div>
<div class="num" style="left:1096.5px;top:821px;text-align:left">12</div>
<div class="num" style="left:1203px;top:821px;text-align:right">12</div>
<div class="num" style="left:1096.5px;top:851px;text-align:left">13</div>
<div class="num" style="left:1203px;top:851px;text-align:right">13</div>
<div class="num" style="left:1096.5px;top:881px;text-align:left">14</div>
<div class="num" style="left:1203px;top:881px;text-align:right">14</div>
<div class="num" style="left:1096.5px;top:911px;text-align:left">15</div>
<div class="num" style="left:1203px;top:911px;text-align:right">15</div>
<div class="num" style="left:1096.5px;top:941px;text-align:left">16</div>
<div class="num" style="left:1203px;top:941px;text-align:right">16</div>
<div class="num" style="left:1096.5px;top:971px;text-align:left">17</div>
<div class="num" style="left:1203px;top:971px;text-align:right">17</div>
<div class="num" style="left:1096.5px;top:1001px;text-align:left">18</div>
<div class="num" style="left:1203px;top:1001px;text-align:right">18</div>
<div class="num" style="left:1096.5px;top:1031px;text-align:left">19</div>
<div class="num" style="left:1203px;top:1031px;text-align:right">19</div>
<div class="num" style="left:1096.5px;top:1061px;text-align:left">20</div>
<div class="num" style="left:1203px;top:1061px;text-align:right">20</div>
<div class="num" style="left:1096.5px;top:1091px;text-align:left">21</div>
<div class="num" style="left:1203px;top:1091px;text-align:right">21</div>
<div class="abs" style="left:6.5px;top:1097px;width:592.5px;height:16px;border-radius:8px;background:#c1c1c1"></div>
<div class="abs" style="left:1333px;top:1097px;width:604px;height:16px;border-radius:8px;background:#c1c1c1"></div>
<div class="abs" style="left:4px;top:628.7px;width:25px;height:4px;background:#ebc700;"></div>
<div class="abs" style="left:4px;top:649px;width:25px;height:4px;background:#b9cdf5;"></div>
<div class="abs" style="left:7px;top:627px;width:16px;height:64px;border-radius:8px;background:rgba(85,85,85,0.7)"></div>
<div class="abs" style="left:2333px;top:649px;width:28px;height:8px;background:#b9cdf5;"></div>
<div class="abs" style="left:2339px;top:627px;width:16px;height:64px;border-radius:8px;background:rgba(85,85,85,0.7)"></div>
<svg style="left:3.2px;top:587px" width="24" height="16" viewBox="0 0 24 16"><path d="M1.7 8C5.5 3.2 9 1.5 12 1.5S18.5 3.2 22.3 8C18.5 12.8 15 14.5 12 14.5S5.5 12.8 1.7 8Z" fill="none" stroke="#828282" stroke-width="2.9" stroke-linejoin="round"/><circle cx="12" cy="8" r="4" fill="#828282"/></svg>
<svg style="left:2335px;top:587px" width="24" height="16" viewBox="0 0 24 16"><path d="M1.7 8C5.5 3.2 9 1.5 12 1.5S18.5 3.2 22.3 8C18.5 12.8 15 14.5 12 14.5S5.5 12.8 1.7 8Z" fill="none" stroke="#828282" stroke-width="2.9" stroke-linejoin="round"/><circle cx="12" cy="8" r="4" fill="#828282"/></svg>
<svg style="left:1057px;top:646px" width="20" height="18" viewBox="0 0 20 18"><path d="M5 4.8H17" stroke="#23993a" stroke-width="2.2" fill="none"/><path d="M0 4.8L6.5 0V9.6Z" fill="#23993a"/><path d="M3.8 13H15" stroke="#cb4a3a" stroke-width="2.2" fill="none"/><path d="M19.8 13L13.5 8V18Z" fill="#cb4a3a"/></svg>
<svg style="left:1286px;top:646px" width="20" height="18" viewBox="0 0 20 18"><path d="M5 4.8H17" stroke="#23993a" stroke-width="2.2" fill="none"/><path d="M0 4.8L6.5 0V9.6Z" fill="#23993a"/><path d="M3.8 13H15" stroke="#cb4a3a" stroke-width="2.2" fill="none"/><path d="M19.8 13L13.5 8V18Z" fill="#cb4a3a"/></svg>
<svg style="left:1057px;top:1036px" width="20" height="18" viewBox="0 0 20 18"><path d="M5 4.8H17" stroke="#23993a" stroke-width="2.2" fill="none"/><path d="M0 4.8L6.5 0V9.6Z" fill="#23993a"/><path d="M3.8 13H15" stroke="#cb4a3a" stroke-width="2.2" fill="none"/><path d="M19.8 13L13.5 8V18Z" fill="#cb4a3a"/></svg>
<svg style="left:1064.5px;top:827.2px" width="18" height="18" viewBox="0 0 18 18"><path d="M1 0.2L9.3 9L1 17.8M9.4 0.2L17.7 9L9.4 17.8" fill="none" stroke="#707070" stroke-width="2.5"/></svg>
<svg style="left:1279.8px;top:827.2px" width="18" height="18" viewBox="0 0 18 18"><path d="M8.6 0.2L0.3 9L8.6 17.8M17 0.2L8.7 9L17 17.8" fill="none" stroke="#707070" stroke-width="2.5"/></svg>
<svg style="left:1038.25px;top:677.5px" width="15.5" height="19" viewBox="0 0 15.5 19"><path d="M0.75 18.25V7.8L7.75 0.9L14.75 7.8V18.25Z" fill="#fff" stroke="#c6c6c6" stroke-width="1.5"/><path d="M4 11.5H11.5" stroke="#c6c6c6" stroke-width="2"/></svg>
<svg style="left:1308.25px;top:677.5px" width="15.5" height="19" viewBox="0 0 15.5 19"><path d="M0.75 18.25V7.8L7.75 0.9L14.75 7.8V18.25Z" fill="#fff" stroke="#c6c6c6" stroke-width="1.5"/><path d="M4 11.5H11.5" stroke="#c6c6c6" stroke-width="2"/></svg>
<svg style="left:1038.25px;top:981.8px" width="15.5" height="19" viewBox="0 0 15.5 19"><path d="M0.75 0.75V11.2L7.75 18.1L14.75 11.2V0.75Z" fill="#fff" stroke="#c6c6c6" stroke-width="1.5"/><path d="M4 7.5H11.5" stroke="#c6c6c6" stroke-width="2"/></svg>
<svg style="left:1308.25px;top:1071px" width="15.5" height="19" viewBox="0 0 15.5 19"><path d="M0.75 0.75V11.2L7.75 18.1L14.75 11.2V0.75Z" fill="#fff" stroke="#c6c6c6" stroke-width="1.5"/><path d="M4 7.5H11.5" stroke="#c6c6c6" stroke-width="2"/></svg>
<svg style="left:1038.25px;top:1101.7px" width="15.5" height="19" viewBox="0 0 15.5 19"><path d="M0.75 0.75V11.2L7.75 18.1L14.75 11.2V0.75Z" fill="#fff" stroke="#c6c6c6" stroke-width="1.5"/><path d="M4 7.5H11.5" stroke="#c6c6c6" stroke-width="2"/></svg>
<svg style="left:1177px;top:835px" width="8" height="32" viewBox="0 0 8 32"><rect x="4" y="0" width="2" height="2" fill="#9d9d9d"/><rect x="6" y="2" width="2" height="2" fill="#fff"/><rect x="0" y="3" width="2" height="2" fill="#9d9d9d"/><rect x="2" y="5" width="2" height="2" fill="#fff"/><rect x="4" y="6" width="2" height="2" fill="#9d9d9d"/><rect x="6" y="8" width="2" height="2" fill="#fff"/><rect x="0" y="9" width="2" height="2" fill="#9d9d9d"/><rect x="2" y="11" width="2" height="2" fill="#fff"/><rect x="4" y="12" width="2" height="2" fill="#9d9d9d"/><rect x="6" y="14" width="2" height="2" fill="#fff"/><rect x="0" y="15" width="2" height="2" fill="#9d9d9d"/><rect x="2" y="17" width="2" height="2" fill="#fff"/><rect x="4" y="18" width="2" height="2" fill="#9d9d9d"/><rect x="6" y="20" width="2" height="2" fill="#fff"/><rect x="0" y="21" width="2" height="2" fill="#9d9d9d"/><rect x="2" y="23" width="2" height="2" fill="#fff"/><rect x="4" y="24" width="2" height="2" fill="#9d9d9d"/><rect x="6" y="26" width="2" height="2" fill="#fff"/><rect x="0" y="27" width="2" height="2" fill="#9d9d9d"/><rect x="2" y="29" width="2" height="2" fill="#fff"/></svg>
<div class="abs" style="left:2361px;top:43px;width:2px;height:1077px;background:#8d8d8d;"></div>
<div class="abs" style="left:0px;top:1120px;width:2367px;height:6px;background:#fff;"></div>
<div class="abs" style="left:3px;top:1119px;width:2360px;height:1px;background:#777;"></div>
</body></html>
